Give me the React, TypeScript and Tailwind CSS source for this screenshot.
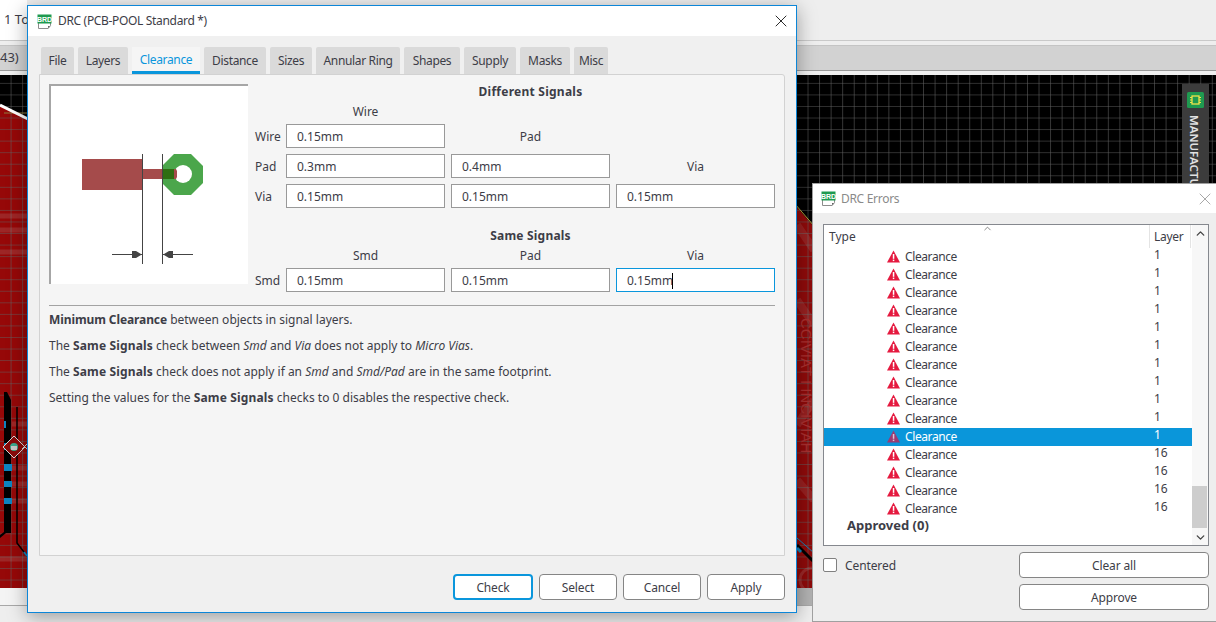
import { X, ChevronUp, ChevronDown } from "lucide-react";

const tabs = ["File", "Layers", "Clearance", "Distance", "Sizes", "Annular Ring", "Shapes", "Supply", "Masks", "Misc"];
const tabWidths: Record<string, string> = {
  File: "w-[33px]",
  Layers: "w-[50px]",
  Clearance: "w-[68px]",
  Distance: "w-[62px]",
  Sizes: "w-[42px]",
  "Annular Ring": "w-[84px]",
  Shapes: "w-[56px]",
  Supply: "w-[52px]",
  Masks: "w-[50px]",
  Misc: "w-[34px]",
};

const errorRows = [1, 1, 1, 1, 1, 1, 1, 1, 1, 1, 1, 16, 16, 16, 16];

function BrdIcon({ className }: { className?: string }) {
  return (
    <svg viewBox="0 0 15 15" width={15} height={15} className={`shrink-0 ${className}`}>
      <path d="M1.5 8.5h12v3.2l-2.3 2.8H1.5z" fill="#fff" stroke="#8c8c8c" />
      <path d="M13 12l-2 0v2.2z" fill="#666" />
      <rect x={0.5} y={0.5} width={14} height={9} fill="#1f9a50" />
      <text x={7.5} y={7.6} textAnchor="middle" fontSize={7} fontFamily="Liberation Sans, sans-serif" fontWeight={700} fill="#fff">
        BRD
      </text>
    </svg>
  );
}

function WarnIcon({ selected }: { selected: boolean }) {
  return (
    <svg viewBox="0 0 13 13" width={13} height={13} className="block">
      <path d="M6.5 0.5L13 12.5H0z" fill={selected ? "#9a3b72" : "#e5193f"} />
      <rect x={5.8} y={4} width={1.5} height={4.8} fill={selected ? "#d9c4d8" : "#fff"} />
      <rect x={5.8} y={9.6} width={1.5} height={1.5} fill={selected ? "#d9c4d8" : "#fff"} />
    </svg>
  );
}

function ClearanceDiagram() {
  return (
    <svg viewBox="49 84 199 200" width={199} height={200} className="block shrink-0 bg-white">
      <path d="M50 285V85H248" fill="none" stroke="#a6a6a6" strokeWidth={2} />
      <rect x={82} y={159} width={61} height={31} fill="#a54b4b" />
      <path d="M174 154h17l12 12v17l-12 12h-17l-12-12v-17z" fill="#4ba64b" />
      <circle cx={183} cy={174} r={9} fill="#fff" />
      <rect x={143} y={169} width={20} height={10} fill="#a54b4b" />
      <rect x={162} y={169} width={13} height={10} fill="#2f6e12" />
      <path d="M174 169h2l1 2v6l-1 2h-2z" fill="#a54b4b" />
      <path d="M142.5 154v110M162.5 154v110M112 254.5h30M163 254.5h30" stroke="#444" fill="none" />
      <path d="M132 251h4l5 3v1l-5 3h-4zM173 251h-4l-5 3v1l5 3h4z" fill="#444" />
    </svg>
  );
}

function Field({ value, active }: { value: string; active?: boolean }) {
  return (
    <div className={`flex h-6 items-center border bg-white pl-[10px] pt-px ${active ? "border-[#0a96dc]" : "border-[#999999]"}`}>
      {value}
      {active && <span className="ml-[-1px] h-4 w-px bg-black" />}
    </div>
  );
}

function Head({ children }: { children: string }) {
  return <div className="flex items-center justify-center pt-px">{children}</div>;
}

function Button({ label, className }: { label: string; className: string }) {
  return (
    <button className={`rounded-[4px] bg-white pt-px tracking-[-0.15px] ${className}`}>{label}</button>
  );
}

function DrcDialog() {
  return (
    <div className="absolute left-[27px] top-[5px] flex h-[608px] w-[770px] flex-col border border-[#0c86d8] bg-[#f0f0f0] shadow-[0_4px_18px_rgba(0,0,0,0.35)]">
      <div className="flex h-[30px] shrink-0 items-center bg-white pl-[9px] pr-[5px]">
        <BrdIcon className="mr-[6px]" />
        <span className="tracking-[-0.33px]">DRC (PCB-POOL Standard *)</span>
        <X size={20} strokeWidth={1} className="ml-auto text-black" />
      </div>

      <div className="mt-[11px] flex h-[27px] shrink-0 gap-1 pl-[13px] tracking-[-0.35px]">
        {tabs.map((tab) =>
          tab === "Clearance" ? (
            <div key={tab} className={`flex items-center justify-center border-b-[3px] border-[#0a96dc] bg-[#f5f5f5] pt-[2px] text-[#0a96dc] ${tabWidths[tab]}`}>
              {tab}
            </div>
          ) : (
            <div key={tab} className={`flex items-center justify-center rounded-t-[2px] bg-[#dadada] ${tabWidths[tab]}`}>
              {tab}
            </div>
          ),
        )}
      </div>

      <div className="mx-[11px] h-[482px] shrink-0 rounded-tr-[3px] border border-[#d2d2d2] bg-[#f5f5f5] pl-[9px] pr-[9px] pt-[9px]">
        <div className="flex">
          <ClearanceDiagram />
          <div className="ml-[7px]">
            <div className="h-[14px] pl-[31px] pt-px text-center font-bold leading-[14px] tracking-[0.25px]">Different Signals</div>
            <div className="grid h-[26px] grid-cols-[25px_159px_159px_159px] gap-x-[6px] pt-[7px] leading-[14px]">
              <span />
              <span className="text-center">Wire</span>
            </div>
            <div className="grid auto-rows-[24px] grid-cols-[25px_159px_159px_159px] gap-x-[6px] gap-y-[6px]">
              <div className="flex items-center pt-px">Wire</div>
              <Field value="0.15mm" />
              <Head>Pad</Head>
              <span />
              <div className="flex items-center pt-px">Pad</div>
              <Field value="0.3mm" />
              <Field value="0.4mm" />
              <Head>Via</Head>
              <div className="flex items-center pt-px">Via</div>
              <Field value="0.15mm" />
              <Field value="0.15mm" />
              <Field value="0.15mm" />
            </div>
            <div className="mt-5 h-[14px] pl-[31px] pt-px text-center font-bold leading-[14px] tracking-[0.2px]">Same Signals</div>
            <div className="mt-[6px] grid h-[14px] grid-cols-[25px_159px_159px_159px] gap-x-[6px] pt-px leading-[14px]">
              <span />
              <span className="text-center">Smd</span>
              <span className="text-center">Pad</span>
              <span className="text-center">Via</span>
            </div>
            <div className="mt-[6px] grid auto-rows-[24px] grid-cols-[25px_159px_159px_159px] gap-x-[6px]">
              <div className="flex items-center pt-px">Smd</div>
              <Field value="0.15mm" />
              <Field value="0.15mm" />
              <Field value="0.15mm" active />
            </div>
          </div>
        </div>

        <div className="mt-[13px] h-px w-[726px] bg-[#a3a3a3]" />

        <div className="mt-[7px] space-y-3 leading-[14px]">
          <p>
            <b className="tracking-[-0.1px]">Minimum Clearance</b> between objects in signal layers.
          </p>
          <p>
            The <b className="tracking-[0.15px]">Same Signals</b> check between <i>Smd</i> and <i>Via</i> does not apply to <i>Micro Vias</i>.
          </p>
          <p>
            The <b className="tracking-[0.15px]">Same Signals</b> check does not apply if an <i>Smd</i> and <i>Smd/Pad</i> are in the same footprint.
          </p>
          <p>
            Setting the values for the <b className="tracking-[0.15px]">Same Signals</b> checks to 0 disables the respective check.
          </p>
        </div>
      </div>

      <div className="mt-[18px] flex justify-end gap-[6px] pr-[11px]">
        <Button label="Check" className="h-[26px] w-[80px] border-2 border-[#0a96dc]" />
        <Button label="Select" className="h-[26px] w-[78px] border border-[#858585]" />
        <Button label="Cancel" className="h-[26px] w-[78px] border border-[#858585]" />
        <Button label="Apply" className="h-[26px] w-[78px] border border-[#858585]" />
      </div>
    </div>
  );
}

function ErrorsWindow() {
  return (
    <div className="absolute left-[812px] top-[183px] h-[439px] w-[412px] border border-[#a0a0a0] bg-[#eeeeee]">
      <div className="flex h-[29px] items-center bg-white pl-[8px] pr-[8px] text-[#8a8a8a]">
        <BrdIcon className="mr-[5px]" />
        <span className="whitespace-nowrap tracking-[-0.3px]">DRC Errors</span>
        <X size={20} strokeWidth={0.9} className="ml-auto text-[#8a8a8a]" />
      </div>

      <div className="ml-[10px] mt-[11px] flex h-[322px] w-[386px] border border-[#85888e] bg-white">
        <div className="relative w-[368px]">
          <ChevronUp size={11} strokeWidth={1.5} className="absolute left-[158px] top-[-2px] text-[#555]" />
          <div className="flex h-[23px]">
            <div className="w-[325px] pl-[5px] pt-[3px]">Type</div>
            <div className="w-[42px] border-x border-[#e4e4e4] pl-[4px] pt-[3px] tracking-[-0.3px]">Layer</div>
          </div>
          {errorRows.map((layer, i) => {
            const selected = i === 10;
            return (
              <div key={i} className={`flex h-[18px] items-center ${selected ? "bg-[#0a96da] text-white" : ""}`}>
                <span className="ml-[63px] mr-[5px] mt-[-1px]">
                  <WarnIcon selected={selected} />
                </span>
                <span className="w-[245px] tracking-[-0.4px]">Clearance</span>
                <span className="ml-[4px] mt-[-5px]">{layer}</span>
              </div>
            );
          })}
          <div className="mt-[-1px] h-4 pl-[23px] text-[13px] font-bold leading-[16px]">Approved (0)</div>
        </div>
        <div className="flex w-4 flex-col bg-[#f7f7f7]">
          <ChevronUp size={13} strokeWidth={2.5} className="ml-[2px] mt-[2px] text-[#444]" />
          <div className="mt-[246px] h-[42px] w-[15px] bg-[#cdcdcd]" />
          <ChevronDown size={13} strokeWidth={2.5} className="ml-[2px] mt-[3px] text-[#444]" />
        </div>
      </div>

      <div className="ml-[10px] mt-[6px] flex w-[386px]">
        <div className="flex h-[26px] w-[196px] items-center">
          <span className="h-[14px] w-[14px] rounded-[2px] border border-[#808080] bg-white" />
          <span className="ml-2 pt-px tracking-[-0.1px]">Centered</span>
        </div>
        <div className="flex flex-col gap-[6px]">
          <Button label="Clear all" className="h-[26px] w-[190px] border border-[#858585]" />
          <Button label="Approve" className="h-[26px] w-[190px] border border-[#858585]" />
        </div>
      </div>
    </div>
  );
}

function PcbCanvas() {
  return (
    <svg viewBox="0 75 1216 513" width={1216} height={513} className="block shrink-0 bg-black">
      <defs>
        <pattern id="grid" x={0} y={3} width={11.55} height={11.55} patternUnits="userSpaceOnUse">
          <path d="M11.5 0V11.55M0 11.5H11.55" stroke="#606060" strokeWidth={1} fill="none" />
        </pattern>
      </defs>
      <path d="M0 105L30 120V588H0z" fill="#960808" />
      <path d="M795 205L814 227V588H795z" fill="#8f0a0a" />
      <rect width={1216} height={513} y={75} fill="url(#grid)" />
      <path d="M4 113H30" stroke="#8f7a3c" />
      <path d="M0 105L30 120" stroke="#fff" strokeWidth={3} />
      <path d="M795 204L814 226" stroke="#b7a13a" />
      <path d="M0 216h30M0 230h30M0 252h30M12 424h20M12 468h20M12 484h20M12 501h20M0 559h30" stroke="#b8a0a0" strokeOpacity={0.2} strokeWidth={5} />
      <path d="M797 225L814 250M797 300L814 325M797 425L814 400M797 480L814 500" stroke="#c8a0a0" strokeOpacity={0.15} strokeWidth={8} />
      <text x={0} y={0} transform="translate(801 318) rotate(90)" fontSize={15} fill="#a83030" fontFamily="Liberation Sans, sans-serif">
        CCIVIAT I  INCIVIAH
      </text>
      <path d="M4 392h3l4 8V533H6l-6 5v-3l4-3z" fill="#000" />
      <path d="M17 407V543L27 556" stroke="#000" strokeWidth={1.5} fill="none" />
      <path d="M24 552L27 556" stroke="#1283b8" strokeWidth={2} />
      <path d="M4 421h2v7H4zM4 464h8v7H4zM4 481h8v6H4zM4 498h8v6H4zM4 443h6v7H4z" fill="#0e84c0" />
      <path d="M14 436l11 11-11 11-11-11z" fill="#8a0a0a" stroke="#d5d5d5" />
      <circle cx={14} cy={447} r={4} fill="#3aa88c" />
      <rect x={11} y={446} width={6} height={4} fill="#c8c8c8" />
      <path d="M22 444l5 5M27 444l-5 5" stroke="#d5d5d5" />
      <path d="M797 545L814 562" stroke="#000" strokeWidth={3} />
      <path d="M797 538L814 553" stroke="#1283b8" />
      <path d="M797 548l4 4" stroke="#1283b8" strokeWidth={3} />
      <circle cx={812} cy={580} r={12} fill="none" stroke="#c8a0a0" strokeOpacity={0.2} strokeWidth={3} />
    </svg>
  );
}

function ManufacturingTab() {
  return (
    <div className="absolute left-[1182px] top-[84px] h-[99px] w-[27px] overflow-hidden bg-[#3c3c3c]">
      <svg viewBox="0 0 17 16" width={17} height={16} className="ml-[5px] mt-2 block">
        <rect width={17} height={16} rx={1.5} fill="#1f9a50" />
        <rect x={5} y={4} width={7} height={8} fill="#1f9a50" stroke="#f2e24a" strokeWidth={1.3} />
        <path d="M3 5.5h2M3 8h2M3 10.5h2M12 5.5h2M12 8h2M12 10.5h2" stroke="#f2e24a" strokeWidth={1} />
      </svg>
      <div className="ml-[4px] mt-[7px] whitespace-nowrap text-[11.5px] font-semibold text-[#e2e2e2] [writing-mode:vertical-rl]">
        MANUFACTURING
      </div>
    </div>
  );
}

export default function App() {
  return (
    <div className="relative flex h-[622px] w-[1216px] flex-col overflow-hidden bg-[#eeeeee] font-['Noto_Sans',sans-serif] text-[12px] text-[#3d3d47]">
      <div className="h-10 shrink-0">
        <div className="flex h-full w-[27px] items-center whitespace-nowrap bg-white pl-[4px] text-[13px]">1 To</div>
      </div>
      <div className="h-px shrink-0 bg-[#c9c9c9]" />
      <div className="h-1 shrink-0" />
      <div className="flex h-[25px] shrink-0 items-center border-t border-[#c4c4c4] bg-[#d2d2d2] text-[13px]">43)</div>
      <div className="h-px shrink-0 bg-[#999999]" />
      <div className="h-1 shrink-0 bg-[#f0f0f0]" />
      <PcbCanvas />
      <div className="flex h-[17px] shrink-0">
        <div className="w-[27px] bg-[#f4f4f4]" />
        <div className="ml-[770px] w-[15px] bg-[#b2b2b2]" />
      </div>
      <div className="h-px shrink-0 bg-[#a8a8a8]" />
      <ManufacturingTab />
      <DrcDialog />
      <ErrorsWindow />
    </div>
  );
}
